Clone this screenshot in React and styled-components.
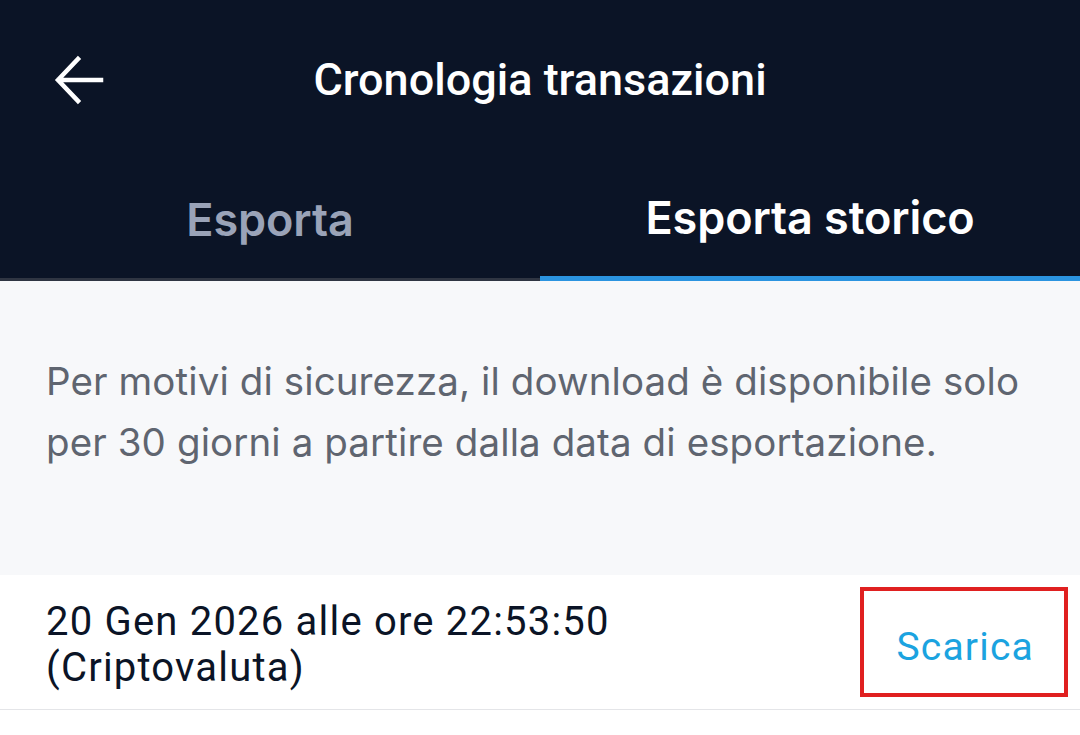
import React from 'react'
import styled, { createGlobalStyle } from 'styled-components'

const Global = createGlobalStyle`
    html, body {
        margin: 0;
        padding: 0;
        background: #ffffff;
    }
    * { box-sizing: border-box; }
`

const Page = styled.div`
    width: 1080px;
    min-height: 735px;
    display: flex;
    flex-direction: column;
    background: #ffffff;
`
const Header = styled.header`
    background: #0b1426;
    display: flex;
    flex-direction: column;
`
const TopBar = styled.div`
    height: 160px;
    display: grid;
    grid-template-columns: 160px 1fr 160px;
    align-items: center;
`
const BackButton = styled.button`
    background: none;
    border: none;
    padding: 0 0 0 54px;
    display: flex;
    align-items: center;
    height: 100%;
    cursor: pointer;
`
const Title = styled.h1`
    margin: 0;
    padding-bottom: 2px;
    text-align: center;
    color: #ffffff;
    font-family: Roboto, "Liberation Sans", sans-serif;
    font-weight: 500;
    font-size: 45px;
`
const Tabs = styled.div`
    display: grid;
    grid-template-columns: 1fr 1fr;
    height: 121px;
`
const Tab = styled.button`
    background: none;
    border: none;
    padding: 0 0 2px;
    font-family: Inter, "Noto Sans", sans-serif;
    font-weight: 600;
    font-size: 45px;
    letter-spacing: -0.1px;
    color: ${p => p.active ? '#ffffff' : '#9aa3b8'};
    border-bottom: ${p => p.active ? '5px solid #2b94e0' : '3px solid #2f3542'};
    margin-top: ${p => p.active ? '0' : '2px'};
    cursor: pointer;
`
const Notice = styled.p`
    margin: 0;
    background: #f7f8fa;
    padding: 70px 46px 0;
    color: #5f6570;
    font-family: Inter, "Noto Sans", sans-serif;
    font-size: 38.5px;
    letter-spacing: 0.1px;
    line-height: 61px;
    height: 294px;
`
const Row = styled.div`
    display: flex;
    align-items: center;
    justify-content: space-between;
    height: 135px;
    padding: 6px 16px 0 46px;
    border-bottom: 1.5px solid #e4e5e8;
`
const RowText = styled.div`
    color: #0b1426;
    font-family: Roboto, "Liberation Sans", sans-serif;
    font-size: 40px;
    letter-spacing: 1.2px;
    line-height: 46px;
`
const Download = styled.button`
    position: relative;
    background: none;
    border: none;
    width: 204px;
    height: 110px;
    margin-top: -6px;
    color: #1ba3e0;
    font-family: Roboto, "Liberation Sans", sans-serif;
    font-size: 39px;
    letter-spacing: 1.2px;
    text-align: right;
    padding: 10px 30px 0 0;
    cursor: pointer;

    &::after {
        content: '';
        position: absolute;
        left: 0;
        top: 0;
        width: 208px;
        height: 110px;
        border: 4px solid #e02020;
        box-sizing: border-box;
    }
`

const BackArrow = () => (
    <svg width="50" height="50" viewBox="0 0 50 50" fill="none">
        <path d="M47 25H5 M24 4L4 25L24 46" stroke="#ffffff" strokeWidth="4.5" strokeLinecap="square" />
    </svg>
)

const App = () => (
    <>
        <Global />
        <Page>
            <Header>
                <TopBar>
                    <BackButton aria-label="Indietro"><BackArrow /></BackButton>
                    <Title>Cronologia transazioni</Title>
                    <div />
                </TopBar>
                <Tabs>
                    <Tab>Esporta</Tab>
                    <Tab active>Esporta storico</Tab>
                </Tabs>
            </Header>
            <Notice>
                Per motivi di sicurezza, il download è disponibile solo per 30 giorni a partire dalla data di esportazione.
            </Notice>
            <Row>
                <RowText>
                    20 Gen 2026 alle ore 22:53:50<br />(Criptovaluta)
                </RowText>
                <Download>Scarica</Download>
            </Row>
        </Page>
    </>
)

export default App
